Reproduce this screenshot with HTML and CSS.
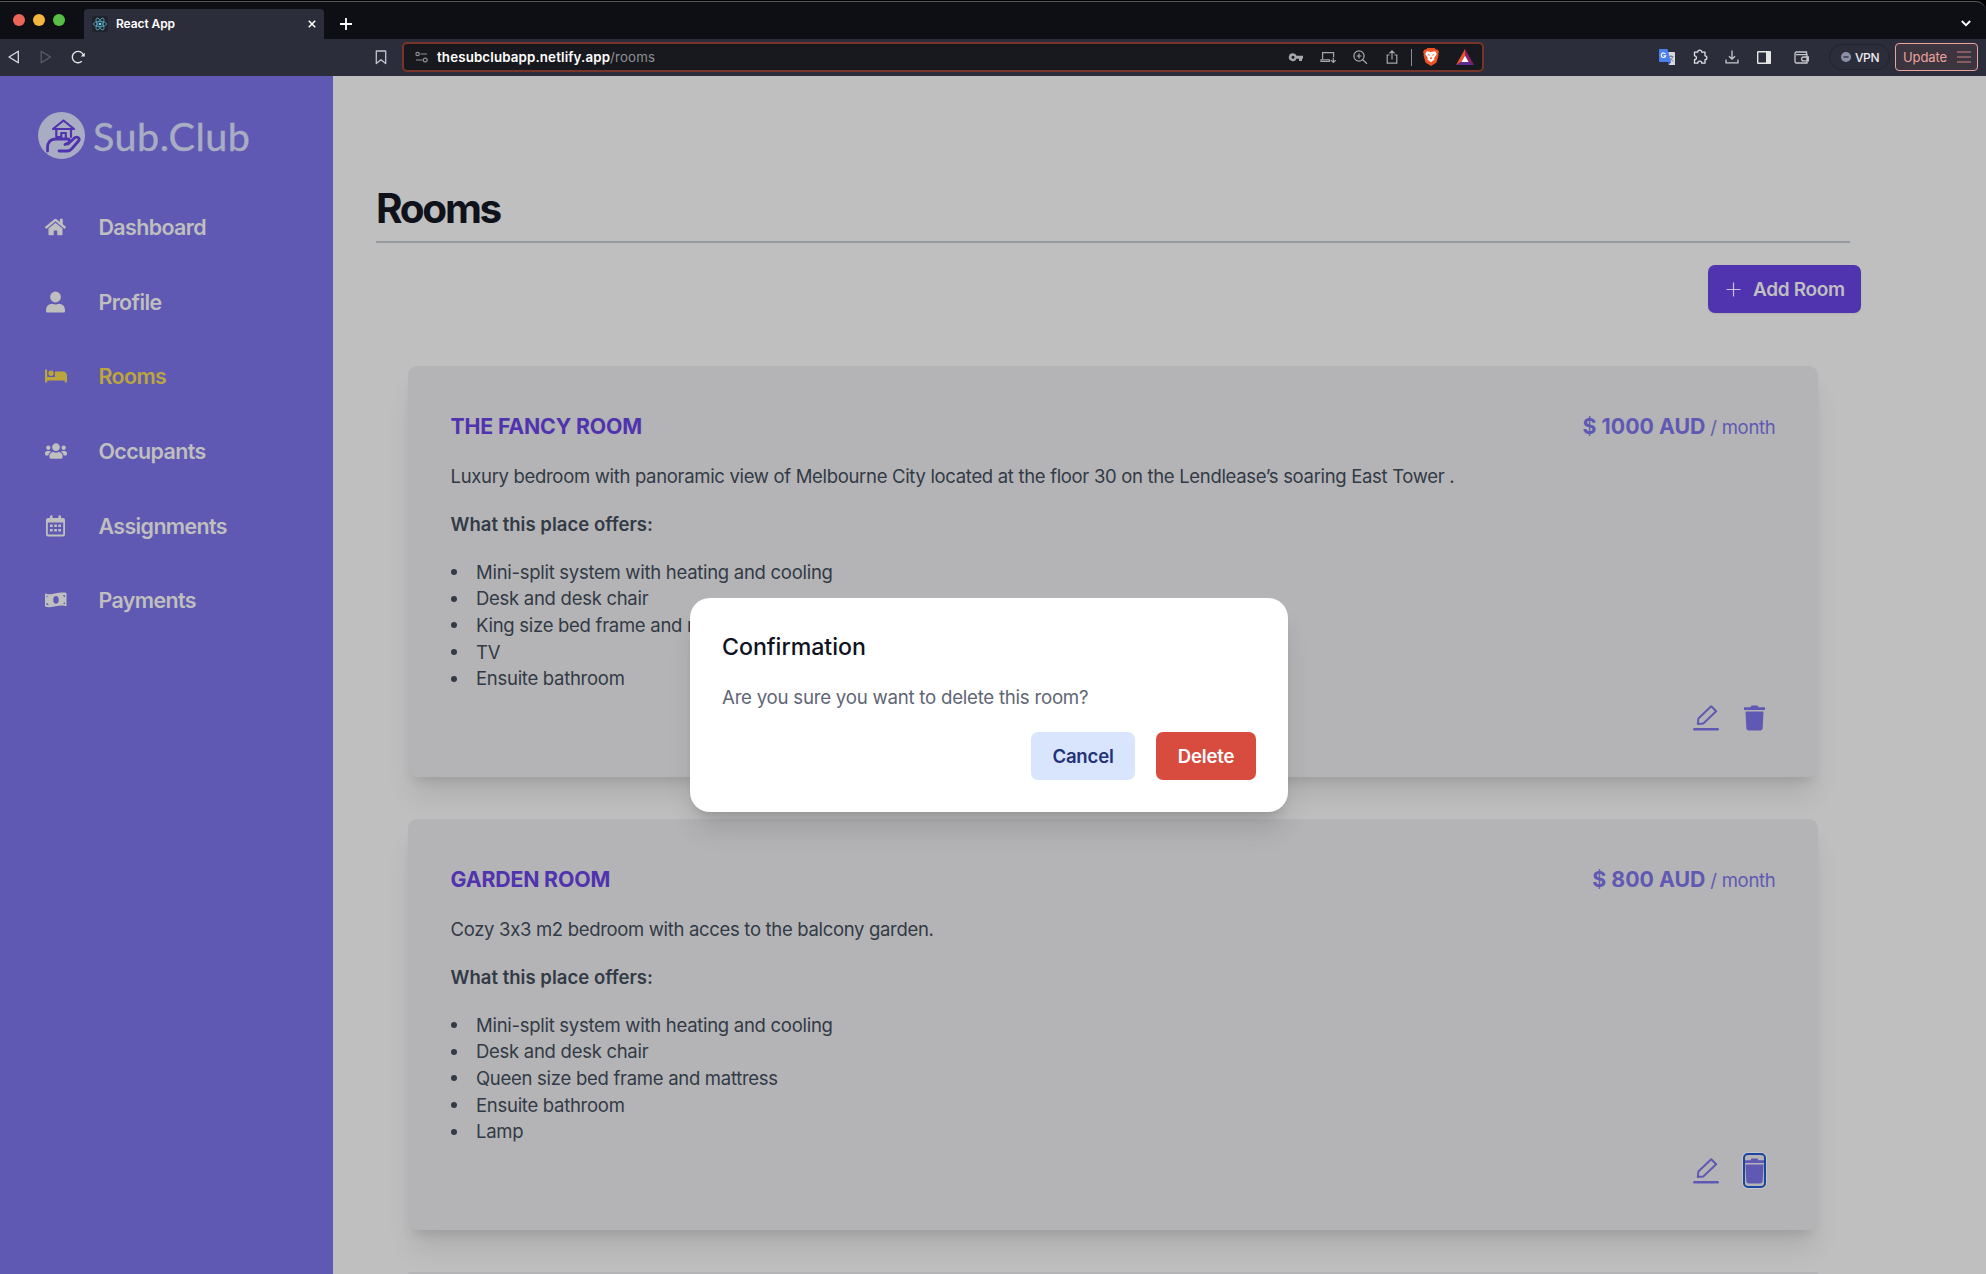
FILE: index.html
```html
<!DOCTYPE html>
<html lang="en">
<head>
<meta charset="utf-8">
<title>React App</title>
<link rel="stylesheet" href="styles.css">
</head>
<body>
<header class="browser">
  <div class="tabstrip">
    <div class="lights"><i class="red"></i><i class="amber"></i><i class="green"></i></div>
    <div class="tab">
      <svg class="favicon" width="16" height="16" viewBox="0 0 16 16"><rect width="16" height="16" rx="2" fill="#20232a"/><g fill="none" stroke="#5aa9c4" stroke-width=".8"><ellipse cx="8" cy="8" rx="6.6" ry="2.6"/><ellipse cx="8" cy="8" rx="6.6" ry="2.6" transform="rotate(60 8 8)"/><ellipse cx="8" cy="8" rx="6.6" ry="2.6" transform="rotate(120 8 8)"/></g><circle cx="8" cy="8" r="1.3" fill="#61dafb"/></svg>
      <span class="tab-title">React App</span>
      <svg width="8" height="8" viewBox="0 0 8 8"><path d="M.8.8l6.4 6.4M7.2.8L.8 7.2" stroke="#fff" stroke-width="1.6"/></svg>
    </div>
    <svg class="newtab" width="12" height="12" viewBox="0 0 12 12"><path d="M6 0v12M0 6h12" stroke="#fff" stroke-width="1.8"/></svg>
    <svg class="chevron" width="10" height="7" viewBox="0 0 10 7"><path d="M.8 1L5 5.2 9.2 1" fill="none" stroke="#fff" stroke-width="1.8"/></svg>
  </div>
  <div class="toolbar">
    <div class="navigation">
      <svg width="12" height="14" viewBox="0 0 12 14"><path d="M10.3 1.2v11.6L1 7z" fill="none" stroke="#dcdce2" stroke-width="1.3" stroke-linejoin="round"/></svg>
      <svg width="12" height="14" viewBox="0 0 12 14"><path d="M1.2 1.2v11.6L10.5 7z" fill="none" stroke="#5c5d6b" stroke-width="1.2" stroke-linejoin="round"/></svg>
      <svg class="reload" width="14" height="14" viewBox="0 0 14 14"><path d="M10.800 11.300A5.700 5.700 0 1 1 12.300 5" fill="none" stroke="#e6e6ea" stroke-width="1.400"/><path d="M9.800 6.500h4V2.700z" fill="#e6e6ea"/></svg>
    </div>
    <svg class="bookmark" width="12" height="15" viewBox="0 0 12 15"><path d="M1.300 1h9.400v12.600L6 9.800l-4.700 3.800z" fill="none" stroke="#c4c4cc" stroke-width="1.300" stroke-linejoin="round"/></svg>
    <div class="address">
      <svg class="site" width="13" height="12" viewBox="0 0 13 12"><g fill="none" stroke="#8f9096" stroke-width="1.200"><circle cx="2.600" cy="3" r="1.700"/><path d="M5.500 3h6.500M1 9h6.500"/><circle cx="10.200" cy="9" r="1.900"/></g></svg>
      <span class="url"><b>thesubclubapp.netlify.app</b>/rooms</span>
      <div class="address-icons">
        <svg width="16" height="16" viewBox="0 0 16 16"><path d="M5 4.200a4 4 0 1 0 3.500 5.500H11v2.300h3V9.700h1V6.800H8.600A4 4 0 0 0 5 4.200zm0 2.600a1.500 1.500 0 1 1 0 3 1.500 1.500 0 0 1 0-3z" fill="#a7a7aa"/></svg>
        <svg width="16" height="16" viewBox="0 0 16 16"><g fill="none" stroke="#a7a7aa" stroke-width="1.200"><path d="M2.600 10V3.600h11V8M1 12.500h8.500V10.800H1zM13.300 8.500v5M11 11.200l2.300 2.300 2.300-2.300"/></g></svg>
        <svg width="16" height="16" viewBox="0 0 16 16"><g fill="none" stroke="#a7a7aa" stroke-width="1.200"><circle cx="7" cy="7" r="5.100"/><path d="M10.700 10.700l4.300 4M4.500 7h5M7 4.500v5"/></g></svg>
        <svg class="share" width="16" height="16" viewBox="0 0 16 16"><path d="M5.500 6H3.200v8.200h9.600V6h-2.300M8 10.500V2M5.400 4.400L8 1.800l2.600 2.600" fill="none" stroke="#a7a7aa" stroke-width="1.200"/></svg>
        <i class="rule"></i>
        <svg class="lion" width="16" height="18" viewBox="0 0 16 18"><path d="M4.500 0h7l1.500 1.600h1.500L16 4l-.8 2 .3 1.200-2 7.300L8 18l-5.500-3.500-2-7.300L.8 6 0 4l1.500-2.400H3z" fill="#ef5426"/><path d="M3.800 3.300L8 4l4.200-.7L13.800 6l-2.600 4 .3 1.600L8 14.200l-3.500-2.600.3-1.600-2.600-4z" fill="#fff"/><path d="M4.300 6l2.500.8-.6 1.200zM11.700 6l-2.500.8.6 1.200zM8 8.300l1 2.300-1 .8-1-.8z" fill="#ef5426"/></svg>
        <svg width="18" height="16" viewBox="0 0 18 16"><path d="M9 0L0 16l5.400-3L9 6.500z" fill="#f0502a"/><path d="M9 0l9 16-5.400-3L9 6.500z" fill="#8f1f63"/><path d="M0 16h18l-5.400-3H5.400z" fill="#5b2d91"/><path d="M9 6.500L5.400 13h7.200z" fill="#fff"/></svg>
      </div>
    </div>
    <div class="extensions">
      <svg width="16" height="16" viewBox="0 0 16 16"><path d="M6 3h9a1 1 0 0 1 1 1v12h-6z" fill="#d8d8dc"/><path d="M9.500 7.500h5M12 6v1.500M13.700 7.500c-.6 2.500-2 4-4 5M10.800 9l3.500 3.600" stroke="#7d828c" fill="none"/><path d="M0 1a1 1 0 0 1 1-1h7.500L12 13H1a1 1 0 0 1-1-1z" fill="#4a80ee"/><path d="M9 13h3l-2.500 3z" fill="#2c56c4"/><path d="M6.500 5A2.300 2.300 0 1 0 6.800 6.700H4.500" fill="none" stroke="#fff" stroke-width="1.100"/></svg>
      <svg width="16" height="16" viewBox="0 0 16 16"><path d="M2.500 3.200h3.200a2 2 0 0 1 4 0H13v3.600a1.900 1.900 0 0 1 0 3.800v3.600H9.800a2 2 0 0 0-4 0H2.500v-3.600a1.900 1.900 0 0 0 0-3.800z" fill="none" stroke="#e0e0e4" stroke-width="1.300" stroke-linejoin="round"/></svg>
      <svg width="14" height="14" viewBox="0 0 14 14"><path d="M7 .5v8.500M4 6.200L7 9.200l3-3M1 9.500v3.300h12V9.500" fill="none" stroke="#c8c8ce" stroke-width="1.300"/></svg>
      <svg class="panel" width="14" height="13" viewBox="0 0 14 13"><rect x=".7" y=".7" width="12.600" height="11.600" rx=".5" fill="none" stroke="#e6e6e6" stroke-width="1.400"/><path d="M9 .5h5v12H9z" fill="#e6e6e6"/></svg>
      <svg class="wallet" width="15" height="13" viewBox="0 0 15 13"><path d="M1 2.500A1.500 1.500 0 0 1 2.500 1h10v2.500M1 2.500v8.200A1.500 1.500 0 0 0 2.500 12H13V3.700H2M14.300 6H9.500a1.900 1.900 0 0 0 0 3.800h4.800z" fill="none" stroke="#c8c8ce" stroke-width="1.300"/></svg>
      <div class="vpn"><svg width="10" height="10" viewBox="0 0 10 10"><circle cx="5" cy="5" r="5" fill="#8d8fa8"/><path d="M2.500 5h5" stroke="#2c2d3a" stroke-width="1.300"/></svg>VPN</div>
      <div class="update">Update<svg width="14" height="12" viewBox="0 0 14 12"><path d="M0 1h14M0 6h14M0 11h14" stroke="#c98583" stroke-width="1.200"/></svg></div>
    </div>
  </div>
</header>

<div class="page">
  <aside class="sidebar">
    <div class="logo">
      <svg width="47" height="47" viewBox="0 0 47 47"><circle cx="23.500" cy="23.500" r="23.500" fill="#a9adc3"/><g fill="none" stroke="#5033ae" stroke-width="2.200" stroke-linejoin="round" stroke-linecap="round"><path d="M15 17l10.500-8.500L36 17zM18.300 17v7.500M33 17v8M18.300 25h5M23.300 25.500V21h4.500v5"/><path d="M9.500 39v-3c0-6 3-9 8-9h12.500c1.500 0 2 2.800 0 4l-3 1.500M21 39h8.500c2 0 3-.8 4.500-2.500l6.500-7.500c2-2.500-1-4.800-3.500-3.500L30 32" stroke-width="2.800"/></g></svg>
      <span class="wordmark">Sub.Club</span>
    </div>
    <nav>
      <a><svg width="21" height="20" viewBox="0 0 576 512"><path fill="currentColor" d="M280.370 148.260L96 300.110V464a16 16 0 0 0 16 16l112.060-.29a16 16 0 0 0 15.920-16V368a16 16 0 0 1 16-16h64a16 16 0 0 1 16 16v95.640a16 16 0 0 0 16 16.050L464 480a16 16 0 0 0 16-16V300L295.670 148.260a12.190 12.190 0 0 0-15.300 0zM571.600 251.470L488 182.560V44.050a12 12 0 0 0-12-12h-56a12 12 0 0 0-12 12v72.610L318.470 43a48 48 0 0 0-61 0L4.340 251.470a12 12 0 0 0-1.600 16.900l25.500 31A12 12 0 0 0 45.150 301l235.220-193.740a12.190 12.190 0 0 1 15.300 0L530.900 301a12 12 0 0 0 16.900-1.600l25.500-31a12 12 0 0 0-1.700-16.930z"/></svg><span>Dashboard</span></a>
      <a><svg width="21" height="22" viewBox="0 0 21 22"><circle cx="10.500" cy="6" r="5.400" fill="currentColor"/><path fill="currentColor" d="M1 20c0-4.500 2-7 6-7.300 2.200 1 4.800 1 7 0 4 .3 6 2.800 6 7.300 0 1-.5 1.500-1.500 1.500h-16C1.500 21.500 1 21 1 20z"/></svg><span>Profile</span></a>
      <a class="active"><svg width="22" height="18" viewBox="0 0 640 512"><path fill="currentColor" d="M176 256c44.110 0 80-35.890 80-80s-35.890-80-80-80-80 35.890-80 80 35.890 80 80 80zm352-128H304c-8.840 0-16 7.160-16 16v144H64V80c0-8.840-7.160-16-16-16H16C7.160 64 0 71.160 0 80v352c0 8.840 7.160 16 16 16h32c8.840 0 16-7.160 16-16v-48h512v48c0 8.840 7.160 16 16 16h32c8.840 0 16-7.160 16-16V240c0-61.860-50.140-112-112-112z"/></svg><span>Rooms</span></a>
      <a><svg width="22" height="18" viewBox="0 0 640 512"><path fill="currentColor" d="M96 224c35.300 0 64-28.700 64-64s-28.700-64-64-64-64 28.700-64 64 28.700 64 64 64zm448 0c35.300 0 64-28.700 64-64s-28.700-64-64-64-64 28.700-64 64 28.700 64 64 64zm32 32h-64c-17.600 0-33.500 7.100-45.100 18.600 40.300 22.100 68.900 62 75.100 109.400h66c17.700 0 32-14.300 32-32v-32c0-35.300-28.700-64-64-64zm-256 0c61.900 0 112-50.100 112-112S381.900 32 320 32 208 82.100 208 144s50.100 112 112 112zm76.800 32h-8.300c-20.800 10-43.900 16-68.500 16s-47.600-6-68.500-16h-8.300C179.600 288 128 339.600 128 403.200V432c0 26.500 21.500 48 48 48h288c26.500 0 48-21.500 48-48v-28.800c0-63.600-51.600-115.200-115.200-115.200zm-223.700-13.400C161.500 263.100 145.600 256 128 256H64c-35.300 0-64 28.700-64 64v32c0 17.700 14.300 32 32 32h65.900c6.300-47.400 34.900-87.300 75.200-109.400z"/></svg><span>Occupants</span></a>
      <a><svg width="21" height="22" viewBox="0 0 21 22"><path fill="currentColor" fill-rule="evenodd" d="M5 1.500a1.300 1.300 0 0 1 2.600 0V3h5.800V1.500a1.300 1.300 0 0 1 2.600 0V3h2a2 2 0 0 1 2 2v14.500a2 2 0 0 1-2 2H3a2 2 0 0 1-2-2V5a2 2 0 0 1 2-2h2zM2.800 7.500v12h15.400v-12z"/><path fill="currentColor" d="M5 9.500h2.700v2.600H5zM9.200 9.500h2.700v2.600H9.200zM13.300 9.500H16v2.600h-2.700zM5 14h2.700v2.600H5zM9.200 14h2.700v2.600H9.200zM13.300 14H16v2.600h-2.700z"/></svg><span>Assignments</span></a>
      <a><svg width="22" height="16" viewBox="0 0 22 16"><path fill="currentColor" fill-rule="evenodd" d="M0 1.500c7 2.500 13.500-2.500 21.500-.5v13.200c-7.500-2.200-14 2.600-21.500.3zM11 4c-1.600 0-2.800 1.700-2.800 3.900s1.200 3.900 2.800 3.900 2.800-1.700 2.800-3.900S12.600 4 11 4zM1.500 4v1.500L3.300 4.200zM1.500 13h2c0-1-.8-1.900-2-2zM20 3.200l-2-.1c0 1 .8 1.700 2 1.900zM20 12v-1.600c-1 0-1.600.6-1.800 1.400z"/></svg><span>Payments</span></a>
    </nav>
  </aside>

  <main>
    <h1>Rooms</h1>
    <button class="add"><svg width="15" height="15" viewBox="0 0 15 15"><path d="M7.500.5v14M.5 7.500h14" stroke="#c4bfd9" stroke-width="1.200"/></svg>Add Room</button>

    <section class="card">
      <div class="card-head"><h2>THE FANCY ROOM</h2><p class="price"><b>$ 1000 AUD</b><span class="per">/ month</span></p></div>
      <p class="desc">Luxury bedroom with panoramic view of Melbourne City located at the floor 30 on the Lendlease’s soaring East Tower .</p>
      <p class="offers">What this place offers:</p>
      <ul>
        <li>Mini-split system with heating and cooling</li>
        <li>Desk and desk chair</li>
        <li>King size bed frame and mattress</li>
        <li>TV</li>
        <li>Ensuite bathroom</li>
      </ul>
      <div class="actions">
        <svg width="26" height="26" viewBox="0 0 26 26"><g fill="none" stroke="#6059b3" stroke-width="2" stroke-linejoin="round"><path d="M4.800 19l.6-5.500L18.200 1.200l5 5L10.300 18.500z"/><path d="M1.300 24.200h23.400" stroke-width="2.400" stroke-linecap="round"/></g></svg>
        <span class="trash"><svg width="21" height="26" viewBox="0 0 21 26"><path fill="#6059b3" d="M0 2.200h6.500L7.500.6h6l1 1.600H21V5H0zM1.500 6.600h18l-.8 16.400c-.1 1.600-1 2.400-2.500 2.400H4.800c-1.500 0-2.400-.8-2.500-2.400z"/></svg></span>
      </div>
    </section>

    <section class="card">
      <div class="card-head"><h2>GARDEN ROOM</h2><p class="price"><b>$ 800 AUD</b><span class="per">/ month</span></p></div>
      <p class="desc">Cozy 3x3 m2 bedroom with acces to the balcony garden.</p>
      <p class="offers">What this place offers:</p>
      <ul>
        <li>Mini-split system with heating and cooling</li>
        <li>Desk and desk chair</li>
        <li>Queen size bed frame and mattress</li>
        <li>Ensuite bathroom</li>
        <li>Lamp</li>
      </ul>
      <div class="actions">
        <svg width="26" height="26" viewBox="0 0 26 26"><g fill="none" stroke="#6059b3" stroke-width="2" stroke-linejoin="round"><path d="M4.800 19l.6-5.500L18.200 1.200l5 5L10.300 18.500z"/><path d="M1.300 24.200h23.400" stroke-width="2.400" stroke-linecap="round"/></g></svg>
        <span class="trash focused"><svg width="21" height="26" viewBox="0 0 21 26"><path fill="#6059b3" d="M0 2.200h6.500L7.500.6h6l1 1.600H21V5H0zM1.500 6.600h18l-.8 16.400c-.1 1.600-1 2.400-2.500 2.400H4.800c-1.500 0-2.400-.8-2.500-2.400z"/></svg></span>
      </div>
    </section>

    <section class="card next"></section>
  </main>
</div>

<div class="overlay">
  <div class="modal">
    <h3>Confirmation</h3>
    <p>Are you sure you want to delete this room?</p>
    <div class="buttons"><button class="cancel">Cancel</button><button class="delete">Delete</button></div>
  </div>
</div>
</body>
</html>
```

FILE: styles.css
```css
* { box-sizing: border-box; }
body, h1, h2, h3, p, ul { margin: 0; padding: 0; font-weight: 400; }
svg { display: block; flex: none; }
button { border: 0; padding: 0; font-family: inherit; }

body {
  position: relative;
  width: 1986px;
  height: 1274px;
  overflow: hidden;
  display: flex;
  flex-direction: column;
  background: #000;
  font-family: Inter, "Liberation Sans", sans-serif;
  font-feature-settings: "calt" 0;
}

/* Browser window */
.browser {
  flex: none;
  height: 75px;
  margin-top: 1px;
  border-top: 1px solid #56575b;
  border-radius: 0 10px 0 0;
  background: #0e0f14;
}
.tabstrip { display: flex; align-items: center; height: 37px; padding-right: 15px; }
.lights { display: flex; gap: 8px; width: 84px; padding: 0 0 2px 13px; }
.lights i { width: 12px; height: 12px; border-radius: 50%; }
.red { background: #ec6559; }
.amber { background: #f3b63c; }
.green { background: #58bf45; }
.tab {
  display: flex;
  align-items: center;
  align-self: flex-end;
  width: 240px;
  height: 30px;
  padding: 0 8px;
  border-radius: 4px 4px 0 0;
  background: #2c2d3a;
}
.tab-title { flex: 1; padding: 0 0 2px 8px; color: #fff; font-size: 12px; font-weight: 600; letter-spacing: -.08px; }
.newtab { margin: 7px 0 0 16px; }
.chevron { margin: 6px 0 0 auto; }
.toolbar { display: flex; align-items: center; height: 36px; background: #2c2d3a; box-shadow: 0 1px #2c2d3a; }
.navigation { display: flex; align-items: center; width: 375px; padding-left: 8px; gap: 20px; }
.reload { margin-left: -1px; }
.address {
  display: flex;
  align-items: center;
  width: 1082px;
  height: 30px;
  margin-left: 15px;
  padding: 0 9px 0 12px;
  border: 2px solid #763528;
  border-radius: 5px;
  background: #18191e;
}
.site { margin-left: -1px; }
.url { flex: 1; padding-left: 9px; color: #8e8f95; font-size: 13.300px; letter-spacing: .15px; }
.url b { color: #fff; font-weight: 600; }
.address-icons { display: flex; align-items: center; margin-right: -1px; }
.address-icons svg { margin-right: 16px; }
.address-icons .share { margin-right: 11px; }
.address-icons .lion { margin-right: 17px; }
.address-icons svg:last-child { margin-right: 0; }
.rule { width: 1px; height: 17px; margin: 0 11px 0 0; background: #8d8d92; }
.extensions { display: flex; align-items: center; margin-left: auto; padding-right: 8px; gap: 17px; }
.panel { margin: 0 -1px 0 1px; }
.wallet { margin-left: 7px; }
.vpn {
  display: flex;
  align-items: center;
  gap: 4px;
  width: 61px;
  height: 26px;
  margin: 0 -12px 0 3px;
  padding-left: 11px;
  border: 1px solid #22232d;
  border-radius: 13px;
  color: #ececf0;
  font-size: 12px;
  font-weight: 500;
  letter-spacing: -.4px;
}
.update {
  display: flex;
  align-items: center;
  justify-content: space-between;
  width: 83px;
  height: 28px;
  padding: 0 6px 0 7px;
  border: 1px solid #eba49d;
  border-radius: 4px;
  background: #3c343e;
  color: #eba49d;
  font-size: 13px;
  letter-spacing: -.1px;
}

/* Application */
.page { flex: 1; display: flex; min-height: 0; overflow: hidden; background: #bfbfbf; }
.sidebar { flex: none; width: 333px; padding-top: 36px; background: #6059b3; }
.logo { display: flex; align-items: center; height: 47px; padding-left: 38px; gap: 8px; }
.wordmark {
  color: #a9adc3;
  font-family: Lato, sans-serif;
  font-size: 39.500px;
  line-height: 47px;
  letter-spacing: .5px;
  -webkit-text-stroke: .4px #a9adc3;
}
nav { padding-top: 31px; }
nav a {
  display: flex;
  align-items: center;
  height: 74.600px;
  padding-left: 45px;
  color: #bfbfbf;
  font-size: 21.400px;
  font-weight: 600;
  letter-spacing: -.6px;
}
nav a > span { margin-left: auto; width: 234.500px; }
nav .active { color: #bba63d; }

main { flex: none; display: flex; flex-direction: column; width: 1485px; padding: 107px 0 0 43px; }
h1 {
  flex: none;
  width: 1474px;
  height: 60px;
  border-bottom: 2px solid #959ba1;
  color: #10121b;
  font-size: 40.500px;
  font-weight: 700;
  line-height: 52px;
  letter-spacing: -2.3px;
}
.add {
  display: flex;
  align-items: center;
  align-self: flex-end;
  flex: none;
  width: 153px;
  height: 48px;
  margin: 22px -43px 53px 0;
  padding: 0 0 0 18px;
  gap: 12px;
  border-radius: 7px;
  background: #5033ae;
  color: #bfbfbf;
  font-size: 19px;
  font-weight: 600;
  letter-spacing: -.35px;
  box-shadow: 0 1px 2px rgba(0, 0, 0, .08);
}
.card {
  flex: none;
  width: 1410px;
  height: 410.500px;
  margin: 0 0 42.500px 32px;
  padding: 44.500px 42.500px 0;
  border-radius: 9px;
  background: #b4b4b6;
  box-shadow: 0 22px 28px -5.500px rgba(0, 0, 0, .1), 0 9px 11px -6.600px rgba(0, 0, 0, .1);
  color: #323a45;
  font-size: 18.500px;
  line-height: 26.670px;
  letter-spacing: -.28px;
}
.next { flex: 1; min-height: 0; height: auto; margin-bottom: 0; padding: 0; border-radius: 9px 9px 0 0; }
.card-head { display: flex; justify-content: space-between; height: 31px; line-height: 31px; font-size: 21.300px; }
h2 { color: #5033ae; font-size: inherit; font-weight: 700; letter-spacing: -.17px; }
.price { color: #6059b3; }
.price b { font-weight: 700; letter-spacing: 0; }
.per { margin-left: 5px; font-size: 18.500px; }
.desc, .offers { margin-top: 21.300px; }
.desc { letter-spacing: -.32px; }
.offers { font-weight: 600; letter-spacing: .03px; }
ul { margin-top: 21.300px; list-style: none; }
li { display: flex; align-items: center; }
li::before { content: ""; width: 6px; height: 6px; margin-right: 19.500px; border-radius: 50%; background: #323a45; }
.actions { display: flex; justify-content: flex-end; gap: 25px; padding: 13px 10.500px 0 0; }
.trash { position: relative; }
.focused::after {
  content: "";
  position: absolute;
  inset: -5px -1px -4px -1px;
  border: 2px solid #1b46a0;
  border-radius: 5px;
  box-shadow: 0 0 0 1px #c6c6ca;
}

/* Confirmation dialog, over the page */
.overlay { position: absolute; inset: 136px 8px 0 0; display: flex; align-items: center; justify-content: center; }
.modal {
  width: 598px;
  height: 214px;
  padding: 33px 32px 0;
  border-radius: 20px;
  background: #fff;
  box-shadow: 0 22px 28px -5.500px rgba(0, 0, 0, .12), 0 9px 11px -6.600px rgba(0, 0, 0, .12);
}
.modal h3 { color: #10131f; font-size: 23.200px; font-weight: 500; line-height: 32px; letter-spacing: -.05px; }
.modal p { margin-top: 21px; color: #5f6675; font-size: 18.700px; line-height: 27px; letter-spacing: -.26px; }
.buttons { display: flex; justify-content: flex-end; gap: 21px; margin-top: 21px; }
.buttons button { height: 48px; border-radius: 7px; font-size: 18.600px; font-weight: 600; letter-spacing: -.2px; }
.cancel { width: 104px; background: #d9e5fd; color: #233278; }
.delete { width: 100px; background: #d84b3f; color: #fff; }
```
